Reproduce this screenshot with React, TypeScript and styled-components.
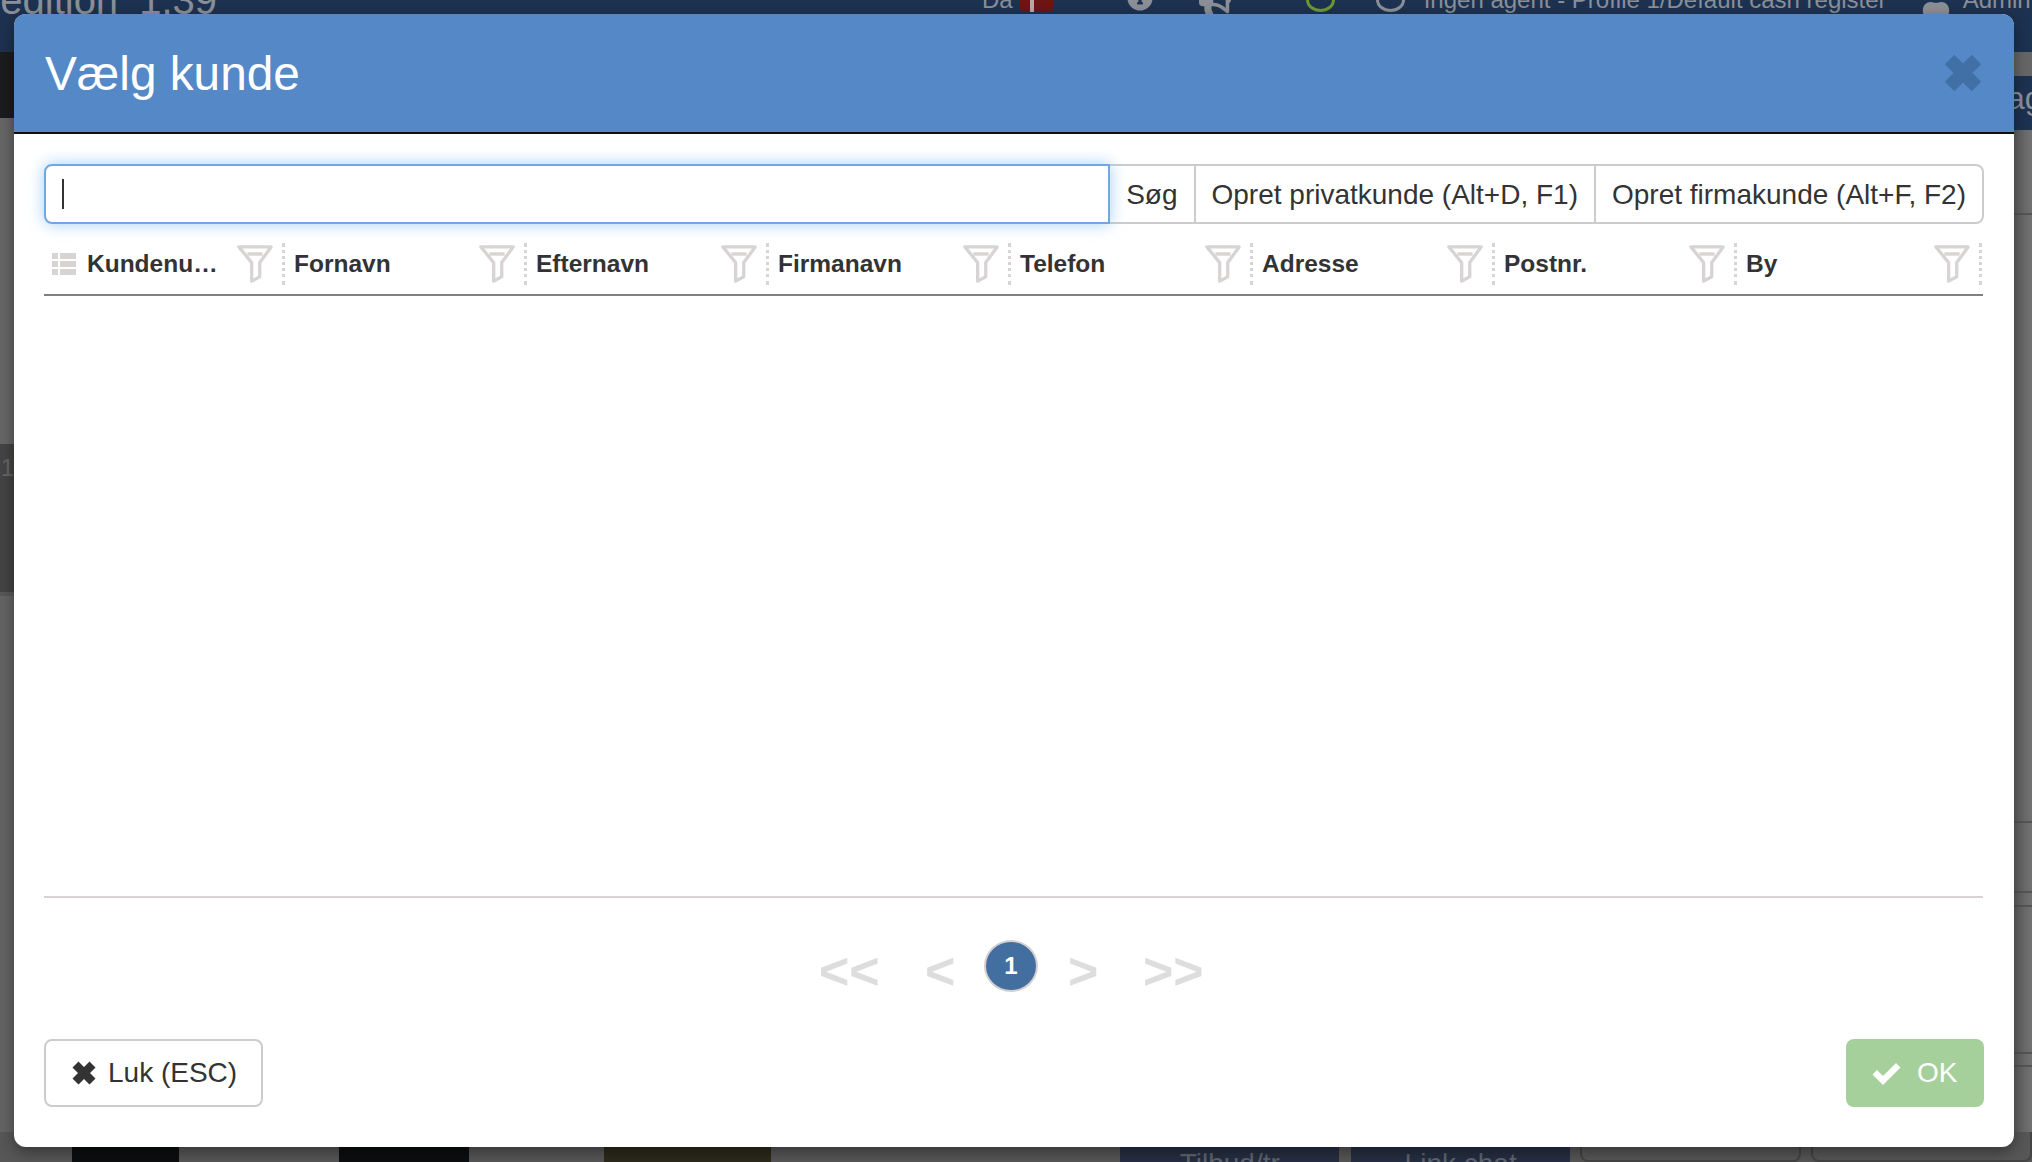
import React from 'react';
import styled, { createGlobalStyle } from 'styled-components';
import { FaInfoCircle, FaBullhorn, FaUser } from 'react-icons/fa';

const columns = ['Kundenu…', 'Fornavn', 'Efternavn', 'Firmanavn', 'Telefon', 'Adresse', 'Postnr.', 'By'];
const rightLines = [83, 606, 68, 12, 145, 11];

function FilterIcon() {
  return (
    <FilterSvg viewBox="0 0 38 40">
      <path d="M2 2H36L24 18.5V33.5L15.5 38V18.5Z" fill="none" stroke="#d9d4d4" strokeWidth="3.5" strokeLinejoin="round" />
      <path d="M11 9.5H27" stroke="#d9d4d4" strokeWidth="3.5" />
    </FilterSvg>
  );
}

function ListIcon() {
  return (
    <ListSvg viewBox="0 0 24 22">
      <path d="M0 0H6V6H0ZM8 0H24V6H8ZM0 8H6V14H0ZM8 8H24V14H8ZM0 16H6V22H0ZM8 16H24V22H8Z" fill="#d9d4d4" />
    </ListSvg>
  );
}

function CrossIcon({ color, size }: { color: string; size: number }) {
  return (
    <svg width={size} height={size} viewBox="0 0 24 24">
      <path d="M6.5 0.5L12 6L17.5 0.5L23.5 6.5L18 12L23.5 17.5L17.5 23.5L12 18L6.5 23.5L0.5 17.5L6 12L0.5 6.5Z" fill={color} />
    </svg>
  );
}

function CheckIcon() {
  return (
    <svg width={29} height={24} viewBox="0 0 29 24">
      <path d="M0.5 13.5L5 9L11 15L24 2L28.5 6.5L11 24Z" fill="#ffffff" />
    </svg>
  );
}

export default function App() {
  return (
    <Page>
      <GlobalStyle />
      <Backdrop>
        <TopBar>
          <BrandText>pedition 1.39</BrandText>
          <TopItems>
            <TopText>Da</TopText>
            <Flag />
            <TopIcon $gap={74}>
              <FaInfoCircle size={26} />
            </TopIcon>
            <TopIcon $gap={46}>
              <FaBullhorn size={32} />
            </TopIcon>
            <Ring $gap={75} $color="#6b9a2c" />
            <Ring $gap={41} $color="#8a8f98" />
            <TopText $gap={19}>Ingen agent - Profile 1/Default cash register</TopText>
            <TopIcon $gap={34}>
              <FaUser size={30} />
            </TopIcon>
            <TopText $gap={12}>Admin</TopText>
          </TopItems>
        </TopBar>
        <Middle>
          <LeftStrip>
            <LeftBlack />
            <LeftGrey />
            <LeftDark>1</LeftDark>
            <LeftRest />
          </LeftStrip>
          <RightStrip>
            <RightGrey />
            <RightNavy>ag</RightNavy>
            <RightRest>
              {rightLines.map((gap, i) => (
                <RightLine key={i} $gap={gap} />
              ))}
            </RightRest>
          </RightStrip>
        </Middle>
        <BottomStrip>
          <Photo $width={108} $gap={72} $color="#0c0e10" />
          <Photo $width={132} $gap={160} $color="#0c0e10" />
          <Photo $width={170} $gap={135} $color="#2c2a1c" />
          <NavyTile $gap={349}>Tilbud/tr</NavyTile>
          <NavyTile $gap={12}>Link chat</NavyTile>
          <OutlineTile $gap={10} />
          <OutlineTile $gap={10} />
        </BottomStrip>
      </Backdrop>

      <Modal>
        <Header>
          <Title>Vælg kunde</Title>
          <CloseButton>
            <CrossIcon color="#4070a5" size={38} />
          </CloseButton>
        </Header>
        <Body>
          <SearchGroup>
            <SearchInput>
              <Caret />
            </SearchInput>
            <GroupButton>Søg</GroupButton>
            <GroupButton>Opret privatkunde (Alt+D, F1)</GroupButton>
            <GroupButton>Opret firmakunde (Alt+F, F2)</GroupButton>
          </SearchGroup>
          <TableHead>
            {columns.map((name, i) => (
              <HeadCell key={name} $first={i === 0}>
                {i === 0 && <ListIcon />}
                <HeadLabel>{name}</HeadLabel>
                <FilterIcon />
              </HeadCell>
            ))}
          </TableHead>
          <TableBody />
          <Pager>
            <PagerArrow $width={60}>&lt;&lt;</PagerArrow>
            <PagerArrow $width={29}>&lt;</PagerArrow>
            <PageBadge>1</PageBadge>
            <PagerArrow $width={29}>&gt;</PagerArrow>
            <PagerArrow $width={60}>&gt;&gt;</PagerArrow>
          </Pager>
          <Footer>
            <CancelButton>
              <CrossIcon color="#333333" size={24} />
              Luk (ESC)
            </CancelButton>
            <OkButton>
              <CheckIcon />
              OK
            </OkButton>
          </Footer>
        </Body>
      </Modal>
    </Page>
  );
}

const GlobalStyle = createGlobalStyle`
  html, body {
    margin: 0;
    padding: 0;
    background: #666;
    font-family: "Liberation Sans", Arial, sans-serif;
  }
`;

const Page = styled.div`
  position: relative;
  width: 2032px;
  height: 1162px;
  overflow: hidden;
`;

const Backdrop = styled.div`
  display: flex;
  flex-direction: column;
  height: 100%;
  background: #636363;
`;

const TopBar = styled.div`
  display: flex;
  height: 52px;
  overflow: hidden;
  background: #1d3251;
  color: #8a8f98;
`;

const BrandText = styled.div`
  flex: none;
  margin: -25px 0 0 -22px;
  font-size: 40px;
  line-height: 50px;
  word-spacing: 10px;
  white-space: nowrap;
`;

const TopItems = styled.div`
  position: absolute;
  top: -12px;
  left: 982px;
  display: flex;
  align-items: flex-start;
  white-space: nowrap;
`;

const TopText = styled.span<{ $gap?: number }>`
  margin-left: ${(p) => p.$gap ?? 0}px;
  font-size: 24px;
  line-height: 24px;
`;

const TopIcon = styled.span<{ $gap: number }>`
  display: flex;
  margin-left: ${(p) => p.$gap}px;
  margin-top: -3px;
`;

const Flag = styled.span`
  width: 33px;
  height: 24px;
  margin-left: 7px;
  background: linear-gradient(90deg, #6e1414 10px, #b9a8a8 10px, #b9a8a8 14px, #6e1414 14px);
`;

const Ring = styled.span<{ $gap: number; $color: string }>`
  box-sizing: border-box;
  width: 29px;
  height: 24px;
  margin-left: ${(p) => p.$gap}px;
  border: 3px solid ${(p) => p.$color};
  border-radius: 50%;
`;

const Middle = styled.div`
  display: flex;
  justify-content: space-between;
  flex: 1;
`;

const LeftStrip = styled.div`
  display: flex;
  flex-direction: column;
  width: 14px;
`;

const LeftBlack = styled.div`
  height: 66px;
  background: #1a1c1e;
`;

const LeftGrey = styled.div`
  height: 326px;
  background: #666;
`;

const LeftDark = styled.div`
  height: 148px;
  background: #444;
  color: #666;
  font-size: 24px;
  line-height: 48px;
  text-align: right;
  overflow: hidden;
`;

const LeftRest = styled.div`
  flex: 1;
  background: #646464;
  border-top: 4px solid #575757;
`;

const RightStrip = styled.div`
  display: flex;
  flex-direction: column;
  width: 18px;
`;

const RightGrey = styled.div`
  height: 24px;
  background: #666;
`;

const RightNavy = styled.div`
  height: 54px;
  overflow: hidden;
  background: #1d3251;
  color: #8a8f98;
  font-size: 32px;
  line-height: 44px;
  text-indent: -7px;
`;

const RightRest = styled.div`
  flex: 1;
  background: linear-gradient(90deg, #5f5f5f, #727272);
`;

const RightLine = styled.div<{ $gap: number }>`
  height: 2px;
  margin-top: ${(p) => p.$gap}px;
  background: #555;
`;

const BottomStrip = styled.div`
  display: flex;
  height: 30px;
  margin-top: -15px;
  background: #575757;
`;

const Photo = styled.div<{ $width: number; $gap: number; $color: string }>`
  width: ${(p) => p.$width}px;
  margin-left: ${(p) => p.$gap}px;
  background: ${(p) => p.$color};
`;

const NavyTile = styled.div<{ $gap: number }>`
  width: 222px;
  margin-left: ${(p) => p.$gap}px;
  padding-top: 16px;
  overflow: hidden;
  background: #262f42;
  color: #5f6673;
  font-size: 28px;
  line-height: 32px;
  text-align: center;
`;

const OutlineTile = styled.div<{ $gap: number }>`
  width: 220px;
  height: 28px;
  margin-left: ${(p) => p.$gap}px;
  border: 2px solid #444;
  border-top: 0;
  border-radius: 0 0 8px 8px;
`;

const Modal = styled.div`
  position: absolute;
  top: 14px;
  left: 14px;
  display: flex;
  flex-direction: column;
  width: 2000px;
  height: 1133px;
  overflow: hidden;
  border-radius: 12px;
  background: #fff;
  box-shadow: 0 5px 15px rgba(0, 0, 0, 0.4);
`;

const Header = styled.div`
  display: flex;
  align-items: center;
  justify-content: space-between;
  box-sizing: border-box;
  height: 120px;
  padding: 0 32px 0 31px;
  border-bottom: 2px solid #0b0f14;
  background: #5488c6;
`;

const Title = styled.div`
  padding-top: 2px;
  color: #fff;
  font-size: 47.75px;
  line-height: 56px;
`;

const CloseButton = styled.div`
  display: flex;
`;

const Body = styled.div`
  display: flex;
  flex-direction: column;
  flex: 1;
  padding: 30px 30px 40px;
`;

const SearchGroup = styled.div`
  display: flex;
  height: 60px;
`;

const SearchInput = styled.div`
  position: relative;
  z-index: 1;
  display: flex;
  align-items: center;
  flex: 1;
  box-sizing: border-box;
  padding-left: 16px;
  border: 2px solid #6fa8e4;
  border-radius: 8px 0 0 8px;
  background: #fff;
  box-shadow: 0 0 16px rgba(102, 175, 233, 0.6);
`;

const Caret = styled.span`
  width: 2px;
  height: 30px;
  background: #333;
`;

const GroupButton = styled.div`
  display: flex;
  align-items: center;
  box-sizing: border-box;
  padding: 2px 16px 0;
  border: 2px solid #ccc;
  border-left: 0;
  color: #333;
  font-size: 28px;
  white-space: nowrap;

  &:last-child {
    border-radius: 0 8px 8px 0;
  }
`;

const TableHead = styled.div`
  display: grid;
  grid-template-columns: 241px repeat(6, 242px) 245px;
  box-sizing: border-box;
  height: 72px;
  margin-right: 1px;
  padding-top: 19px;
  border-bottom: 2px solid #808080;
`;

const HeadCell = styled.div<{ $first: boolean }>`
  display: flex;
  align-items: center;
  box-sizing: border-box;
  height: 42px;
  padding: 0 8px 0 ${(p) => (p.$first ? 8 : 9)}px;
  border-right: 3px dotted #d9d4d4;
`;

const HeadLabel = styled.span`
  flex: 1;
  min-width: 0;
  overflow: hidden;
  color: #333;
  font-size: 24.5px;
  font-weight: 700;
  white-space: nowrap;
`;

const ListSvg = styled.svg`
  flex: none;
  width: 24px;
  height: 22px;
  margin-right: 11px;
`;

const FilterSvg = styled.svg`
  flex: none;
  width: 38px;
  height: 38px;
`;

const TableBody = styled.div`
  flex: 1;
  margin-right: 1px;
  border-bottom: 2px solid #d8d2d2;
`;

const Pager = styled.div`
  display: flex;
  align-items: center;
  justify-content: center;
  gap: 46px;
  height: 141px;
  padding-right: 6px;
`;

const PagerArrow = styled.span<{ $width: number }>`
  width: ${(p) => p.$width}px;
  margin-top: 5px;
  color: #dddddd;
  font-size: 52px;
  font-weight: 700;
  line-height: 50px;
  white-space: nowrap;
  text-align: center;
`;

const PageBadge = styled.span`
  display: flex;
  align-items: center;
  justify-content: center;
  box-sizing: border-box;
  width: 54px;
  height: 52px;
  margin: -6px -16px 0;
  border: 2px solid #d5cfcf;
  border-radius: 50%;
  background: #426ea0;
  color: #fff;
  font-size: 24px;
  font-weight: 700;
`;

const Footer = styled.div`
  display: flex;
  justify-content: space-between;
`;

const CancelButton = styled.div`
  display: flex;
  align-items: center;
  gap: 12px;
  box-sizing: border-box;
  width: 219px;
  height: 68px;
  padding-left: 26px;
  border: 2px solid #ccc;
  border-radius: 8px;
  color: #333;
  font-size: 28px;
`;

const OkButton = styled.div`
  display: flex;
  align-items: center;
  gap: 16px;
  box-sizing: border-box;
  width: 138px;
  height: 68px;
  padding-left: 26px;
  border-radius: 8px;
  background: #a5d09b;
  color: #fff;
  font-size: 28px;
`;
